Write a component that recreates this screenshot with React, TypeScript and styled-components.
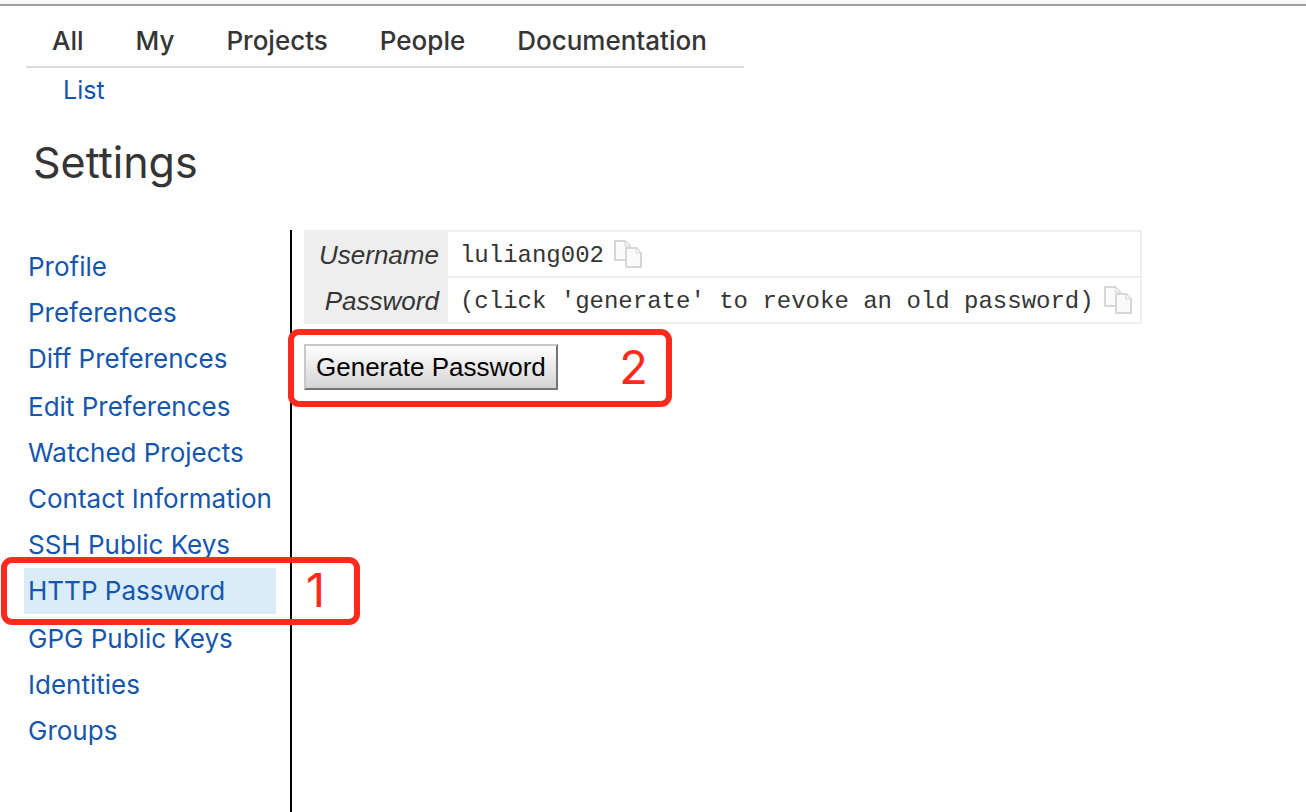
import React from "react";
import styled, { createGlobalStyle } from "styled-components";

const GlobalStyle = createGlobalStyle`
  * { box-sizing: border-box; }
  html, body { margin: 0; padding: 0; background: #fff; }
  body {
    color: #353535;
    font-family: Inter, "Liberation Sans", sans-serif;
    font-size: 26px;
    line-height: 46px;
  }
`;

const Page = styled.div`
  display: flex;
  flex-direction: column;
  min-height: 100vh;
  overflow-x: hidden;
`;

const TopEdge = styled.div`
  flex: none;
  height: 6px;
  background: #f6f8fa;
  border-bottom: 2px solid #a0a0a2;
`;

const MainMenu = styled.nav`
  display: flex;
  align-self: flex-start;
  gap: 52px;
  margin-left: 26px;
  padding: 12px 37px 2px 26px;
  border-bottom: 2px solid #dcdcdc;
`;

const MenuLink = styled.a`
  color: #353535;
  font-size: 26px;
  font-weight: 500;
  text-decoration: none;
`;

const SubMenu = styled.nav`
  padding-left: 63px;
  line-height: 44px;
`;

const TextLink = styled.a`
  color: #1556ad;
  font-size: 25px;
  text-decoration: none;
`;

const Title = styled.h1`
  margin: 20px 0 0;
  padding-left: 33px;
  font-size: 43px;
  font-weight: 400;
  line-height: 60px;
`;

const Columns = styled.div`
  display: flex;
  flex: 1;
  margin-top: 38px;
`;

const Sidebar = styled.nav`
  flex: none;
  width: 292px;
  padding: 14px 14px 40px 24px;
  border-right: 2px solid #000;
`;

const SideList = styled.ul`
  margin: 0;
  padding: 0;
  list-style: none;
`;

const SideItem = styled.li<{ $active?: boolean }>`
  position: relative;
  padding-left: 4px;
  background: ${(p) => (p.$active ? "#d9ecf8" : "transparent")};
  white-space: nowrap;

  &:nth-child(5n + 4) {
    margin-top: 2px;
  }
`;

const SideLink = styled.a`
  display: block;
  color: #1556ad;
  font-size: 26px;
  text-decoration: none;
`;

const Content = styled.main`
  flex: 1;
  min-width: 0;
  padding: 0 12px;
`;

const Info = styled.table`
  border-collapse: separate;
  border-spacing: 0;
  border-top: 2px solid #eee;
  border-right: 2px solid #eee;
`;

const InfoLabel = styled.th`
  height: 46px;
  padding: 0 9px 0 15px;
  background: #eee;
  font-family: "Liberation Sans", sans-serif;
  font-size: 26px;
  font-style: italic;
  font-weight: 400;
  line-height: 44px;
  text-align: right;
`;

const InfoValue = styled.td`
  padding: 0 7px 0 12px;
  border-bottom: 2px solid #eee;
  white-space: nowrap;
`;

const ValueRow = styled.div`
  display: flex;
  align-items: center;
  gap: 9px;
`;

const ValueText = styled.span`
  padding-top: 4px;
  font-family: "Liberation Mono", monospace;
  font-size: 24px;
  line-height: 40px;
`;

const CopyButton = styled.button`
  display: block;
  padding: 0;
  border: 0;
  background: none;

  svg { display: block; }
`;

const Actions = styled.div`
  position: relative;
  display: inline-block;
  margin-top: 20px;
`;

const GenerateButton = styled.button`
  display: block;
  height: 46px;
  padding: 0 10px;
  border: 2px solid;
  border-color: #c8c8c8 #757575 #757575 #c8c8c8;
  border-radius: 0;
  background: linear-gradient(#fff, #d4d4d4);
  color: #000;
  font-family: "Liberation Sans", sans-serif;
  font-size: 26px;
  line-height: 42px;
  white-space: nowrap;
`;

const Callout = styled.div<{ $x: number; $y: number; $w: number; $h: number; $pad: number }>`
  position: absolute;
  z-index: 1;
  top: ${(p) => p.$y}px;
  left: ${(p) => p.$x}px;
  display: flex;
  align-items: center;
  justify-content: flex-end;
  width: ${(p) => p.$w}px;
  height: ${(p) => p.$h}px;
  padding: 0 ${(p) => p.$pad}px 2px 0;
  border: 6px solid #ff2a1c;
  border-radius: 11px;
  color: #ff2a1c;
  font-size: 47px;
  line-height: 48px;
  pointer-events: none;
`;

const menu = ["All", "My", "Projects", "People", "Documentation"];
const sections = [
  "Profile",
  "Preferences",
  "Diff Preferences",
  "Edit Preferences",
  "Watched Projects",
  "Contact Information",
  "SSH Public Keys",
  "HTTP Password",
  "GPG Public Keys",
  "Identities",
  "Groups",
];
const account = [
  ["Username", "luliang002"],
  ["Password", "(click 'generate' to revoke an old password)"],
];

function CopyIcon() {
  return (
    <svg width="30" height="30" viewBox="0 0 30 30" fill="#fafafa" stroke="#d6d6d6" strokeWidth="2" strokeLinejoin="round">
      <path d="M2 2H12L17 7V21H2Z" />
      <path d="M12 2.500V7H17" strokeWidth="1" />
      <path d="M13 9H23L28 14V28H13Z" />
      <path d="M23 9.500V14H28" strokeWidth="1" />
    </svg>
  );
}

export default function App() {
  return (
    <Page>
      <GlobalStyle />
      <TopEdge />
      <MainMenu>
        {menu.map((m) => (
          <MenuLink key={m} href="#">{m}</MenuLink>
        ))}
      </MainMenu>
      <SubMenu>
        <TextLink href="#">List</TextLink>
      </SubMenu>
      <Title>Settings</Title>
      <Columns>
        <Sidebar>
          <SideList>
            {sections.map((s) => {
              const active = s === "HTTP Password";
              return (
                <SideItem key={s} $active={active}>
                  <SideLink href="#">{s}</SideLink>
                  {active && <Callout $x={-23} $y={-11} $w={359} $h={68} $pad={29}>1</Callout>}
                </SideItem>
              );
            })}
          </SideList>
        </Sidebar>
        <Content>
          <Info>
            <tbody>
              {account.map(([label, value]) => (
                <tr key={label}>
                  <InfoLabel scope="row">{label}</InfoLabel>
                  <InfoValue>
                    <ValueRow>
                      <ValueText>{value}</ValueText>
                      <CopyButton aria-label={`Copy ${label}`}><CopyIcon /></CopyButton>
                    </ValueRow>
                  </InfoValue>
                </tr>
              ))}
            </tbody>
          </Info>
          <Actions>
            <GenerateButton>Generate Password</GenerateButton>
            <Callout $x={-16} $y={-15} $w={384} $h={78} $pad={18}>2</Callout>
          </Actions>
        </Content>
      </Columns>
    </Page>
  );
}
